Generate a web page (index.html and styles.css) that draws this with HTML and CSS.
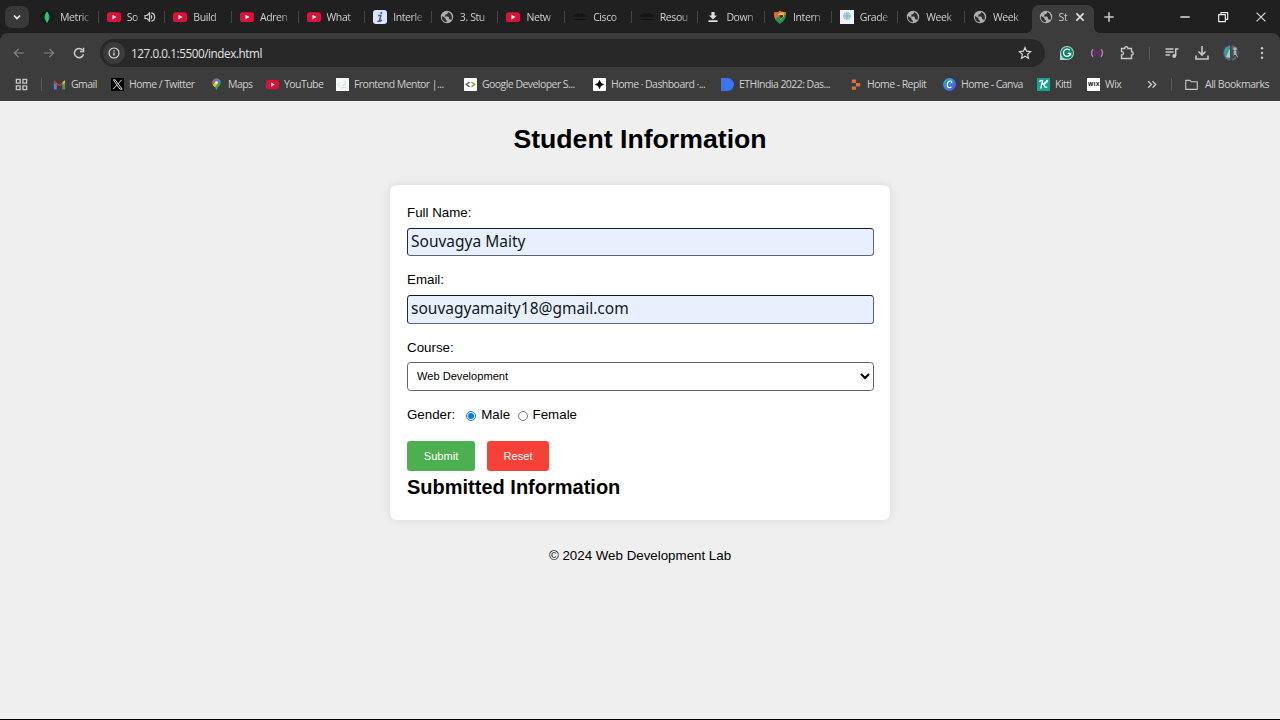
FILE: index.html
```html
<!DOCTYPE html>
<html lang="en">
<head>
<meta charset="utf-8">
<title>Student Information</title>
<link rel="stylesheet" href="styles.css">
</head>
<body>
<svg class="defs" aria-hidden="true">
  <symbol id="yt" viewBox="0 0 14 14"><rect y="2.2" width="14" height="9.8" rx="2.6" fill="#dd1137"/><path d="M5.500 4.800v4.600L9.400 7.100z" fill="#fff"/></symbol>
  <symbol id="globe" viewBox="0 0 14 14"><circle cx="7" cy="7" r="6.2" fill="#adb0b3"/><path d="M2 6 5.500 8.200v1.300l1.300 1v1.700C3.500 12 1.400 9.500 2 6zM8 2v1L6.800 4.200H5.500v1.200L4.300 6.500h3.500l1.200 1v1.700h1.200l1 1C12.600 8 12.200 3.500 8 2z" fill="#2c2d2f"/></symbol>
  <symbol id="cisco" viewBox="0 0 14 14"><path d="M1 5v2M3 4v3M5 3v4M7 4v3M9 3v4M11 4v3M13 5v2M1 9.500h12" stroke="#101010" stroke-width="1.200"/></symbol>
</svg>
<header class="chrome">
  <div class="tabstrip">
    <button class="search-tabs"><svg viewBox="0 0 24 22"><path d="m9 9.500 3 3 3-3" fill="none" stroke="#eee" stroke-width="1.700"/></svg></button>
    <div class="tab"><svg viewBox="0 0 14 14"><circle cx="7" cy="7" r="6.500" fill="#092018"/><path d="M7 1.500C3.400 5.500 4 9.500 7 12.300 10 9.500 10.500 5.500 7 1.500z" fill="#20b66b"/><path d="M7 2v11" stroke="#7adba2" stroke-width=".6"/></svg><span>Metric</span></div>
    <div class="tab audible"><svg><use href="#yt"/></svg><span>So</span><svg class="sound" viewBox="0 0 12 12"><path d="M1 4.500h2L5.500 2v8L3 7.500H1zM7 4.200q1.500 1.800 0 3.600M7.300 1.800a4.300 4.300 0 0 1 0 8.400" fill="none" stroke="#c9c9c9" stroke-width="1.200"/></svg></div>
    <div class="tab"><svg><use href="#yt"/></svg><span>Build</span></div>
    <div class="tab"><svg><use href="#yt"/></svg><span>Adren</span></div>
    <div class="tab"><svg><use href="#yt"/></svg><span>What</span></div>
    <div class="tab"><svg viewBox="0 0 14 14"><rect width="14" height="14" rx="3" fill="#dce5ff"/><path d="M5.200 5.500h2.600L6.500 11M4.500 11.200q2 .6 4.500-1" fill="none" stroke="#3554b4" stroke-width="1.500"/><circle cx="8.300" cy="3" r="1.100" fill="#3554b4"/></svg><span>Interle</span></div>
    <div class="tab"><svg><use href="#globe"/></svg><span>3. Stu</span></div>
    <div class="tab"><svg><use href="#yt"/></svg><span>Netw</span></div>
    <div class="tab"><svg><use href="#cisco"/></svg><span>Cisco</span></div>
    <div class="tab"><svg><use href="#cisco"/></svg><span>Resou</span></div>
    <div class="tab"><svg viewBox="0 0 14 14"><path d="M5.400 2h3.200v3.500H11L7 9.500 3 5.500h2.400zM2.500 10.300h9v1.700h-9z" fill="#dedede"/></svg><span>Down</span></div>
    <div class="tab"><svg viewBox="0 0 14 14"><path d="M1 2q5 .8 6-1.500Q8 2.500 13 2c.4 5.500-1.300 9-6 12C2.300 11 .6 7.500 1 2z" fill="#259447"/><path d="M1 2q5 .8 6-1.500Q8 2.500 13 2l-.2 3H7L3.800 8l-1 2C1.200 7.400.8 5 1 2z" fill="#e36a2a"/><path d="m4.500 5 3-2.400h3.300v4L7 10V7h2V5z" fill="#f2bd50"/><path d="M7.500 5H10v2L7 9z" fill="#352c25"/></svg><span>Intern</span></div>
    <div class="tab"><svg viewBox="0 0 14 14"><path d="M0 0h14v14H0z" fill="#edf4f7"/><circle cx="7" cy="6" r="3.500" fill="#b6d2e4" stroke="#86afc9" stroke-dasharray="1.500 1"/><path d="M4 6h6M7 3v6" stroke="#6c9fbd" stroke-width=".6"/></svg><span>Grade</span></div>
    <div class="tab"><svg><use href="#globe"/></svg><span>Week</span></div>
    <div class="tab"><svg><use href="#globe"/></svg><span>Week</span></div>
    <div class="tab active"><svg><use href="#globe"/></svg><span>St</span><svg class="close" viewBox="0 0 10 10"><path d="m2 2 6 6m0-6L2 8" stroke="#e5e5e5" stroke-width="1.300"/></svg></div>
    <svg class="new-tab" viewBox="0 0 12 12"><path d="M6 2v8M2 6h8" stroke="#ccc" stroke-width="1.300"/></svg>
    <div class="window-buttons">
      <svg viewBox="0 0 12 12"><path d="M2 6h8" stroke="#fff" stroke-width="1.100"/></svg>
      <svg viewBox="0 0 12 12"><path d="M2.300 4H8v6H2.300zM4.200 4V2.300H10V8H8" fill="none" stroke="#eee" stroke-width="1" stroke-linejoin="round"/></svg>
      <svg viewBox="0 0 12 12"><path d="m2.200 2.200 7.600 7.600m0-7.600L2.200 9.800" stroke="#ddd" stroke-width="1"/></svg>
    </div>
  </div>
  <div class="toolbar">
    <nav class="history">
      <svg viewBox="0 0 14 14"><path d="M12 7H2.500m4.100-4.200L2.400 7l4.200 4.200" fill="none" stroke="#858585" stroke-width="1.200"/></svg>
      <svg viewBox="0 0 14 14"><path d="M2 7h9.500M7.400 2.800 11.600 7l-4.200 4.200" fill="none" stroke="#858585" stroke-width="1.200"/></svg>
      <svg viewBox="0 0 14 14"><path d="M11.500 8.200A4.600 4.600 0 1 1 10.500 4M11.500 1.800v3.700H8" fill="none" stroke="#ccc" stroke-width="1.500"/></svg>
    </nav>
    <div class="address">
      <div class="info"><svg viewBox="0 0 14 14"><circle cx="7" cy="7" r="5" fill="none" stroke="#e5e5e5" stroke-width="1.100"/><path d="M7 6.500v3M7 4.300v1.200" stroke="#e5e5e5" stroke-width="1.300"/></svg></div>
      <span>127.0.0.1:5500/index.html</span>
      <svg class="star" viewBox="0 0 14 14"><path d="m7 1.500 1.600 3.700 4 .4-3 2.700.9 4L7 10.200l-3.500 2.100.9-4-3-2.700 4-.4z" fill="none" stroke="#d5d5d5" stroke-width="1.200"/></svg>
    </div>
    <div class="tools">
      <svg viewBox="0 0 16 16"><path d="M8 1a7 7 0 1 1 0 14H1V8a7 7 0 0 1 7-7z" fill="#a5dccb"/><circle cx="8" cy="8" r="6" fill="#0b806a"/><path d="M10.800 5.400a3.600 3.600 0 1 0 .8 3H8.700m2.900-.2v2.400" fill="none" stroke="#fff" stroke-width="1.300"/></svg>
      <svg viewBox="0 0 16 16"><path d="M4 4.200q-3 3.800 0 7.600m8-7.600q3 3.800 0 7.600" fill="none" stroke="#b38abd" stroke-width="1.300"/><path d="M6.500 5q-2 3 0 6m3-6q2 3 0 6" fill="none" stroke="#792481" stroke-width="1.300"/><circle cx="8" cy="8" r="1.300" fill="#792481"/></svg>
      <svg viewBox="0 0 16 16"><path d="M2.500 3.500h3.200q0-1.700 1.600-1.700t1.600 1.700h3.600v3.300q1.700 0 1.700 1.600t-1.700 1.600v3.500h-10V10q2-.2 2-1.800t-2-1.700z" fill="none" stroke="#c8c8c8" stroke-width="1.400"/></svg>
      <i class="divider"></i>
      <svg viewBox="0 0 16 16"><path d="M1.500 4h8M1.500 7h8M1.500 10H6" stroke="#c8c8c8" stroke-width="1.400"/><path d="M14.500 4h-2.800v7" fill="none" stroke="#c8c8c8" stroke-width="1.500"/><circle cx="10.200" cy="11" r="1.900" fill="#c8c8c8"/></svg>
      <svg viewBox="0 0 16 16"><path d="M8 1v8.500M4.500 6.500 8 10l3.500-3.500M2 10.500V14h12v-3.500" fill="none" stroke="#c8c8c8" stroke-width="1.600"/></svg>
      <svg viewBox="0 0 16 16"><circle cx="8" cy="8" r="7.700" fill="#59666a"/><path d="M2 3 7 .5V9l-3 5Q-.5 10 2 3z" fill="#3798a4"/><path d="m3 4 3 1-3 7 4 1V5" fill="#b4c5c5"/><path d="M8 0v16M10 5h4v4l2 4h-2l-2-3-2 3V9z" fill="#a9b1b1" stroke="#263237" stroke-width="1"/><circle cx="12" cy="4" r="1.800" fill="#aeb5b5"/></svg>
      <svg viewBox="0 0 16 16"><g fill="#ccc"><circle cx="8" cy="3.200" r="1.200"/><circle cx="8" cy="8" r="1.200"/><circle cx="8" cy="12.800" r="1.200"/></g></svg>
    </div>
  </div>
  <div class="bookmarks">
    <svg class="apps" viewBox="0 0 14 14"><path d="M1.500 1.500h4v4h-4zM8.500 1.500h4v4h-4zM1.500 8.500h4v4h-4zM8.500 8.500h4v4h-4z" fill="none" stroke="#c5c5c5" stroke-width="1.500"/></svg>
    <i class="divider"></i>
    <a><svg viewBox="0 0 14 14"><path d="M1 3v9h3V6.500L7 9l3-2.500V12h3V3L7 7.500z" fill="#e34a3e"/><path d="M1 4v8h2.600V6z" fill="#4785e8"/><path d="M13 4v8h-2.600V6z" fill="#35a555"/><path d="m10.400 4 2.600-1.700V5l-2.600 2z" fill="#f1bb28"/><path d="M1 2.500 3.600 4v3L1 5z" fill="#bb3040"/></svg><span>Gmail</span></a>
    <a><svg viewBox="0 0 14 14"><path d="M0 0h14v14H0z" fill="#000"/><path d="M2.500 2h2L12 12h-2.300zM11.500 2l-4 4.500M6.300 7.600 2.300 12" fill="none" stroke="#eee"/></svg><span>Home / Twitter</span></a>
    <a><svg viewBox="0 0 14 14"><path d="M7 .5a4.600 4.600 0 0 1 4.600 4.600C11.600 8.500 8 9 7 13.500 6 9 2.400 8.500 2.400 5.100A4.600 4.600 0 0 1 7 .5z" fill="#35a853"/><path d="M7 .5A4.600 4.600 0 0 0 2.500 6L7 5z" fill="#e84b3c"/><path d="M7 .5a4.600 4.600 0 0 1 4.200 2.700L5.500 8 3 7z" fill="#4285e8"/><path d="m3 7.400 3-3 2 2L5 10z" fill="#f7bd24"/><circle cx="7" cy="5" r="1.500" fill="#eee"/></svg><span>Maps</span></a>
    <a><svg><use href="#yt"/></svg><span>YouTube</span></a>
    <a><svg viewBox="0 0 14 14"><path d="M0 0h14v14H0z" fill="#f7f9f8"/><path d="m4 5-2 2 2 2m1 2 6-1M10 3v4L7 8" fill="none" stroke="#b8ceca" stroke-width=".8"/></svg><span>Frontend Mentor |...</span></a>
    <a><svg viewBox="0 0 14 14"><rect width="14" height="14" rx="1" fill="#fff"/><path d="M6 4.300 2.500 7 6 9.500" fill="none" stroke="#58646e" stroke-width="1.600"/><path d="m8 4.300 3.500 2.700L8 9.500" fill="none" stroke="#96a51d" stroke-width="1.600"/></svg><span>Google Developer S...</span></a>
    <a><svg viewBox="0 0 14 14"><rect width="14" height="14" rx="1" fill="#fff"/><path d="M7 2.500Q7.700 6.300 11.500 7 7.700 7.700 7 11.500 6.300 7.700 2.500 7 6.300 6.300 7 2.500z" fill="#000" stroke="#000" stroke-width=".7"/></svg><span>Home · Dashboard ·...</span></a>
    <a><svg viewBox="0 0 14 14"><path d="M0 0h7a7 7 0 0 1 0 14H0z" fill="#3975ef"/></svg><span>ETHIndia 2022: Das...</span></a>
    <a><svg viewBox="0 0 14 14"><path d="M3 1.500h4.500v3.800H3zM7.500 5.300H12v3.800H7.500zM3 9.100h4.500v3.600H3z" fill="#d97531"/></svg><span>Home - Replit</span></a>
    <a><svg viewBox="0 0 14 14"><defs><linearGradient id="canva" x2="1" y2="1"><stop stop-color="#15bcca"/><stop offset=".55" stop-color="#3e83df"/><stop offset="1" stop-color="#742ddd"/></linearGradient></defs><circle cx="7" cy="7" r="7" fill="url(#canva)"/><path d="M9.300 5.500Q9.500 3 7.500 3.300 4.500 4 4.700 8q.3 3.800 4.500 1.600" fill="none" stroke="#fff" stroke-width="1.200"/></svg><span>Home - Canva</span></a>
    <a><svg viewBox="0 0 14 14"><path d="M0 0h14v14H0z" fill="#16a58c"/><path d="M2.500 4Q4 2 6 3L4 11.500M5 7q4-1 5.500-4 1.500-1 .5 1-2 2.500-4 2.800Q9 11.500 11 9.500" fill="none" stroke="#fff" stroke-width="1.400"/></svg><span>Kittl</span></a>
    <a><svg viewBox="0 0 14 14"><path d="M0 0h14v14H0z" fill="#fff"/><text class="wix" x="7" y="9" text-anchor="middle" textLength="12">WIX</text></svg><span>Wix</span></a>
    <svg class="more" viewBox="0 0 12 12"><path d="m2 3 3 3-3 3m4-6 3 3-3 3" fill="none" stroke="#ccc" stroke-width="1.200"/></svg>
    <i class="divider"></i>
    <a><svg viewBox="0 0 14 14"><path d="M.8 2.500h4.500L6.700 4h6.500v8.200H.8z" fill="none" stroke="#c8c8c8" stroke-width="1.200" stroke-linejoin="round"/></svg><span class="all">All Bookmarks</span></a>
  </div>
</header>
<main class="page">
  <h1>Student Information</h1>
  <form class="card">
    <label for="name">Full Name:</label>
    <input class="field" id="name" value="Souvagya Maity">
    <label for="email">Email:</label>
    <input class="field" id="email" value="souvagyamaity18@gmail.com">
    <label for="course">Course:</label>
    <select class="field" id="course"><option>Web Development</option></select>
    <div class="gender">
      <span class="legend">Gender:</span>
      <input type="radio" name="gender" id="male" checked><label for="male">Male</label>
      <input type="radio" name="gender" id="female"><label for="female">Female</label>
    </div>
    <div class="actions"><button type="button" class="submit">Submit</button><button type="button" class="reset">Reset</button></div>
    <h2>Submitted Information</h2>
  </form>
  <footer>© 2024 Web Development Lab</footer>
</main>
</body>
</html>
```

FILE: styles.css
```css
* { box-sizing: border-box; }
body {
  margin: 0;
  height: 720px;
  overflow: hidden;
  display: flex;
  flex-direction: column;
  font-family: "Liberation Sans", Arial, sans-serif;
  background: #efefef;
  border-bottom: 1px solid #000;
}
svg { display: block; flex: none; }
.defs { position: absolute; width: 0; height: 0; }

/* Browser frame */
.chrome {
  height: 101px;
  flex: none;
  background: #202020;
  color: #cfcfcf;
  font: 10.5px/16px "Open Sans", "Noto Sans", sans-serif;
  white-space: nowrap;
}
.tabstrip { display: flex; height: 33px; }
.search-tabs {
  width: 24px;
  height: 22px;
  margin: 6px 3px 0 5px;
  padding: 0;
  border: 0;
  border-radius: 7px;
  background: #393939;
}
.tab {
  display: flex;
  align-items: center;
  width: 66.65px;
  flex: none;
  padding-left: 8px;
  gap: 6px;
  background: linear-gradient(#484848, #484848) right 11px / 1px 12px no-repeat;
}
.tab svg { width: 14px; height: 14px; }
.tab span {
  width: 29px;
  letter-spacing: -0.4px;
  mask-image: linear-gradient(90deg, #000 70%, rgb(0 0 0 / 30%));
}
.tab.audible span { width: 12px; }
.tab .sound { width: 12px; height: 12px; margin-left: -1px; }
.tab:nth-last-child(4) { background: none; }
.tab.active {
  position: relative;
  width: 62px;
  height: 28px;
  margin-top: 5px;
  padding: 0 0 5px 7px;
  background: #3c3c3c;
  border-radius: 7px 7px 0 0;
}
.tab.active::before,
.tab.active::after {
  content: "";
  position: absolute;
  bottom: 0;
  width: 6px;
  height: 6px;
}
.tab.active::before { right: 100%; background: radial-gradient(circle at 0 0, transparent 6px, #3c3c3c 6px); }
.tab.active::after { left: 100%; background: radial-gradient(circle at 100% 0, transparent 6px, #3c3c3c 6px); }
.active span { width: 10px; }
.active .close { width: 12px; height: 12px; margin-left: -1px; }
.new-tab { width: 14px; height: 14px; margin: 10px 0 0 8px; }
.window-buttons { display: flex; gap: 24px; margin: 10px 12px 0 auto; }
.window-buttons svg { width: 14px; height: 14px; }
.toolbar {
  display: flex;
  align-items: center;
  height: 34px;
  padding-top: 6px;
  background: #3c3c3c;
  border-radius: 8px 8px 0 0;
}
.history { display: flex; gap: 16px; width: 100px; padding-left: 12px; }
.history svg { width: 14px; height: 14px; }
.address {
  display: flex;
  align-items: center;
  width: 945px;
  height: 28px;
  padding: 0 13px 0 3px;
  border-radius: 14px;
  background: #282828;
  color: #e3e3e3;
  font-size: 11.7px;
  letter-spacing: -0.42px;
}
.info { padding: 4px; margin-right: 6px; border-radius: 50%; background: #3b3b3b; }
.info svg { width: 14px; height: 14px; }
.star { width: 14px; height: 14px; margin-left: auto; }
.tools {
  display: grid;
  grid-template-columns: 30px 30px 30px 15px 30px 29px 31px 16px;
  align-items: center;
  padding-left: 14px;
}
.tools svg { width: 16px; height: 16px; }
.divider { width: 1px; height: 13px; background: #5b5b5b; }
.bookmarks {
  display: grid;
  grid-template-columns: 26px 12px 58px 99px 56px 70px 128px 129px 128px 128px 94px 94px 50px 59px 25px 14px 90px;
  align-items: center;
  height: 34px;
  padding-left: 15px;
  background: #3c3c3c;
}
.bookmarks a { display: flex; align-items: center; gap: 5px; letter-spacing: -0.55px; }
.bookmarks svg { width: 13px; height: 13px; }
.bookmarks .all { margin-left: 2px; letter-spacing: -0.46px; }
.wix { font: bold 6px "Liberation Sans", sans-serif; fill: #000; }

/* Student form */
.page { display: flex; flex-direction: column; align-items: center; color: #000; font-size: 13.33px; line-height: 16px; }
h1 { margin: 23px 0 30px; font-size: 26.67px; line-height: 31px; }
.card {
  display: flex;
  flex-direction: column;
  width: 500px;
  height: 335px;
  padding: 20px 17px 0;
  border-radius: 7px;
  background: #fff;
  box-shadow: 0 0 8px rgb(0 0 0 / 10%);
}
.field {
  width: 466.5px;
  height: 28.8px;
  margin: 6.7px 0 15.8px;
  padding: 0 3px 2px;
  border: 1px solid #60646b;
  border-radius: 3.5px;
  color: #101820;
}
input.field {
  border-top-color: #151a20;
  border-left-color: #252a30;
  background: #e8f0fe;
  font: 15.5px "Noto Sans", sans-serif;
}
select.field { padding: 0 5px 2px; background: #fff; color: #000; font: 11.1px "Liberation Sans", sans-serif; }
.gender { display: flex; align-items: center; height: 16px; }
.legend { margin-right: 11px; }
.gender input { width: 10px; height: 10px; margin: 2px 5px 0 0; }
.gender label { margin-right: 7.5px; }
.actions { display: flex; gap: 12px; margin-top: 18.5px; }
.actions button {
  height: 30px;
  padding: 0 0 1px;
  border: 0;
  border-radius: 3px;
  color: #fff;
  font: 11.1px "Liberation Sans", sans-serif;
}
.submit { width: 68px; background: #4caf50; }
.reset { width: 62px; background: #f44336; }
h2 { margin: 4px 0 0; font-size: 20px; line-height: 24px; }
footer { margin-top: 28px; }
```
